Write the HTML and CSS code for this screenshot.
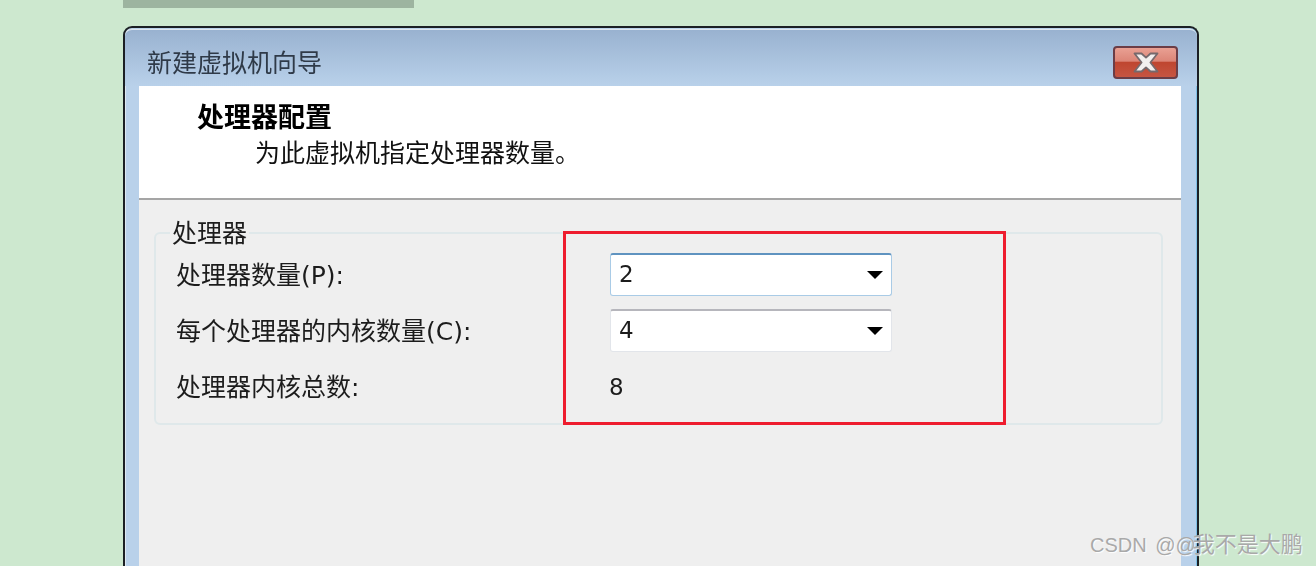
FILE: index.html
```html
<!DOCTYPE html>
<html lang="zh-CN">
<head>
<meta charset="UTF-8">
<title>新建虚拟机向导</title>
<link rel="stylesheet" href="styles.css">
</head>
<body>
<div class="top-strip"></div>
<div class="window">
  <div class="title-bar">
    <span class="title-text">新建虚拟机向导</span>
    <div class="close-btn">
      <svg class="close-icon" width="26" height="21" viewBox="0 0 26 21">
        <path d="M1.5 1.5 L8.5 1.5 L13 5.6 L17.5 1.5 L24.5 1.5 L17.4 10.5 L24.5 19.5 L17.5 19.5 L13 15.4 L8.5 19.5 L1.5 19.5 L8.6 10.5 Z" fill="#f2efee" stroke="#76696c" stroke-width="1.8" stroke-linejoin="round"/>
      </svg>
    </div>
  </div>
  <div class="client">
    <div class="wizard-header">
      <div class="wizard-title">处理器配置</div>
      <div class="wizard-sub">为此虚拟机指定处理器数量。</div>
    </div>
    <div class="content">
      <div class="group">
        <span class="group-title">处理器</span>
        <div class="form-grid">
          <div class="form-label">处理器数量(P):</div>
          <div class="combo focused"><span>2</span><i class="arrow"></i></div>
          <div class="form-label">每个处理器的内核数量(C):</div>
          <div class="combo"><span>4</span><i class="arrow"></i></div>
          <div class="form-label">处理器内核总数:</div>
          <div class="total">8</div>
        </div>
      </div>
    </div>
  </div>
</div>
<div class="red-box"></div>
<div class="watermark">CSDN @@<span class="watermark-cn">我不是大鹏</span></div>
</body>
</html>
```

FILE: styles.css
```css
html, body {
  margin: 0;
  padding: 0;
  overflow: hidden;
}
body {
  background: #cde8cf;
  font-family: "DejaVu Sans", "Noto Sans CJK SC", sans-serif;
  color: #1c1c1c;
  padding-left: 123px;
  box-sizing: border-box;
  height: 566px;
}
.top-strip {
  width: 291px;
  height: 8px;
  background: #9db4a0;
}
.window {
  margin-top: 18px;
  width: 1076px;
  height: 540px;
  box-sizing: border-box;
  border: 2px solid #1b1f24;
  border-bottom: 0;
  border-radius: 9px 9px 0 0;
  background: #b9d1ea;
  box-shadow: inset 1px 0 0 #dfe8f2, inset -1px 0 0 #7fc0e6;
  padding: 1px 15px 0 14px;
  filter: blur(0.4px);
}
.title-bar {
  height: 57px;
  margin: 0 -15px 0 -14px;
  padding: 6px 19px 0 22px;
  box-sizing: border-box;
  display: flex;
  align-items: center;
  justify-content: space-between;
  background: linear-gradient(#99b2d0, #b9d1ea);
  border-top: 1px solid #dfe6ee;
  border-radius: 7px 7px 0 0;
}
.title-text {
  font-size: 25px;
  color: #2f3a48;
  margin-top: -1px;
}
.close-btn {
  width: 65px;
  height: 33px;
  box-sizing: border-box;
  border: 2px solid #6b3d46;
  border-radius: 4px;
  margin-top: 3px;
  display: flex;
  align-items: center;
  justify-content: center;
  background: linear-gradient(#e9a093 0%, #dc8577 45%, #bf4630 50%, #c65542 100%);
}
.client {
  background: #efefef;
  height: 482px;
  margin-right: 1px;
}
.wizard-header {
  height: 114px;
  box-sizing: border-box;
  background: #fff;
  border-bottom: 2px solid #a5a5a5;
  padding-top: 15px;
}
.wizard-title {
  margin-left: 58px;
  font-size: 27px;
  line-height: 34px;
  font-weight: 700;
  color: #000;
}
.wizard-sub {
  margin-left: 116px;
  margin-top: 1px;
  font-size: 25px;
  line-height: 36px;
  color: #111;
}
.content {
  padding: 32px 18px 0 15px;
}
.group {
  height: 193px;
  box-sizing: border-box;
  border: 2px solid #dfe8ea;
  border-radius: 6px;
  padding-left: 20px;
}
.group-title {
  display: block;
  width: max-content;
  margin: -16px 0 0 -6px;
  padding: 0 2px;
  background: #efefef;
  font-size: 25px;
  line-height: 32px;
}
.form-grid {
  display: grid;
  grid-template-columns: 434px 282px;
  grid-auto-rows: 43px;
  row-gap: 13px;
  margin-top: 3px;
  font-size: 25px;
}
.form-label {
  display: flex;
  align-items: center;
  white-space: nowrap;
  padding-bottom: 3px;
  box-sizing: border-box;
}
.combo {
  box-sizing: border-box;
  display: flex;
  align-items: center;
  justify-content: space-between;
  padding: 0 8px 3px 8px;
  background: #fff;
  border: 1px solid #e2e5ea;
  border-top: 2px solid #b6b6bc;
  border-radius: 3px;
  font-size: 23px;
}
.combo.focused {
  border: 1px solid #a9cbe6;
  border-top: 2px solid #5f93c0;
}
.arrow {
  width: 0;
  height: 0;
  border-left: 8px solid transparent;
  border-right: 8px solid transparent;
  border-top: 8px solid #000;
  margin-top: 3px;
}
.total {
  display: flex;
  align-items: center;
  font-size: 23px;
  margin-left: -1px;
}
.red-box {
  position: absolute;
  left: 563px;
  top: 231px;
  width: 443px;
  height: 194px;
  box-sizing: border-box;
  border: 3px solid #ee1c2e;
}
.watermark {
  position: absolute;
  left: 1090px;
  top: 530px;
  font-family: "Liberation Sans", "Noto Sans CJK SC", sans-serif;
  font-size: 20px;
  line-height: 30px;
  word-spacing: 3px;
  white-space: nowrap;
  color: #a9a9a9;
  text-shadow: 1px 1px 1px #fff;
}
.watermark-cn {
  font-size: 22px;
  margin-left: -3px;
}
```
